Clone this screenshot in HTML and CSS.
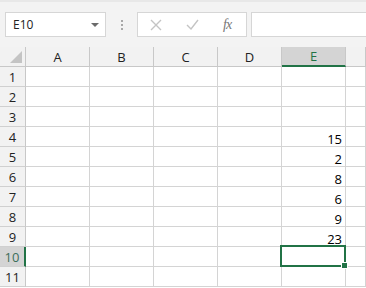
FILE: index.html
```html
<!DOCTYPE html>
<html lang="en">
<head>
  <meta charset="UTF-8" />
  <title>Sheet</title>
  <link rel="stylesheet" href="styles.css">
</head>
<body>
  <!-- Formula bar -->
  <div class="toolbar">
    <div class="namebox">
      <span>E10</span>
      <svg class="caret" width="8" height="4" viewBox="0 0 8 4"><path d="M0 0h8L4 4z" fill="#6b6b6b"/></svg>
    </div>
    <div class="grip"><i></i><i></i><i></i></div>
    <div class="fnbox">
      <svg width="12" height="12" viewBox="0 0 12 12"><path d="M1 1l10 10M11 1L1 11" stroke="#c4c4c4" stroke-width="1.4" fill="none"/></svg>
      <svg width="13" height="11" viewBox="0 0 13 11"><path d="M1 6l4 4 7-9" stroke="#c4c4c4" stroke-width="1.4" fill="none"/></svg>
      <span class="fx">fx</span>
    </div>
    <div class="formula"></div>
  </div>

  <!-- Grid -->
  <div class="sheet" id="sheet"></div>

  <script>
    const cols = ['A', 'B', 'C', 'D', 'E', ''];
    const values = { 4: 15, 5: 2, 6: 8, 7: 6, 8: 9, 9: 23 };
    const sheet = document.getElementById('sheet');

    let html = '<div class="corner"><i></i></div>';
    cols.forEach(c => {
      html += `<div class="colhead${c === 'E' ? ' active' : ''}">${c}</div>`;
    });
    for (let r = 1; r <= 11; r++) {
      html += `<div class="rowhead${r === 10 ? ' active' : ''}">${r}</div>`;
      cols.forEach(c => {
        const v = c === 'E' && values[r] !== undefined ? values[r] : '';
        html += `<div class="cell">${v}</div>`;
      });
    }
    html += '<div class="selection"><i></i></div>';
    sheet.innerHTML = html;
  </script>
</body>
</html>
```

FILE: styles.css
```css
body {
  margin: 0;
  width: 366px;
  height: 288px;
  overflow: hidden;
  background: #ffffff;
  font-family: "Open Sans", "Liberation Sans", sans-serif;
}

.toolbar {
  display: flex;
  align-items: center;
  height: 47px;
  box-sizing: border-box;
  padding-left: 5px;
  background: #f3f3f3;
  border-top: 2px solid #e8e8e8;
}

.namebox {
  display: flex;
  align-items: center;
  justify-content: space-between;
  width: 101px;
  height: 25px;
  box-sizing: border-box;
  padding: 0 6px 0 7px;
  background: #ffffff;
  border: 1px solid #d6d6d6;
  font-size: 12px;
  color: #222;
}

.grip {
  display: flex;
  flex-direction: column;
  gap: 2px;
  width: 31px;
  align-items: center;
}

.grip i {
  width: 2px;
  height: 2px;
  background: #a8a8a8;
}

.fnbox {
  display: flex;
  align-items: center;
  gap: 24px;
  width: 110px;
  height: 25px;
  box-sizing: border-box;
  padding-left: 12px;
  background: #ffffff;
  border: 1px solid #d6d6d6;
}

.fx {
  font-family: "Liberation Serif", serif;
  font-style: italic;
  font-size: 14px;
  color: #777;
  letter-spacing: -1px;
}

.formula {
  flex: 1;
  height: 25px;
  margin-left: 4px;
  box-sizing: border-box;
  background: #ffffff;
  border: 1px solid #d6d6d6;
  border-right: none;
}

.sheet {
  position: relative;
  display: grid;
  grid-template-columns: 26px repeat(5, 64px) 1fr;
  grid-auto-rows: 20px;
}

.corner,
.colhead,
.rowhead {
  background: #f2f2f2;
  box-sizing: border-box;
  border-right: 1px solid #c8c8c8;
  border-bottom: 1px solid #c8c8c8;
  font-size: 13px;
  color: #222;
  display: flex;
  align-items: center;
  justify-content: center;
}

.corner {
  position: relative;
}

.corner i {
  position: absolute;
  right: 3px;
  bottom: 3px;
  border-left: 12px solid transparent;
  border-bottom: 12px solid #c4c4c4;
}

.colhead.active {
  background: #d4d4d4;
  color: #217346;
  border-bottom: 2px solid #217346;
}

.rowhead {
  background: #f2f2f2;
  border-bottom-color: #d0d0d0;
}

.rowhead.active {
  background: #d4d4d4;
  color: #3d6e5a;
  border-right: 2px solid #217346;
}

.cell {
  box-sizing: border-box;
  border-right: 1px solid #d4d4d4;
  border-bottom: 1px solid #d4d4d4;
  font-family: "Open Sans", "Liberation Sans", sans-serif;
  font-size: 13px;
  color: #000;
  text-align: right;
  padding: 3px 3px 0 0;
  line-height: 18px;
}

.selection {
  position: absolute;
  left: 280px;
  top: 198px;
  width: 66px;
  height: 22px;
  box-sizing: border-box;
  border: 2px solid #217346;
}

.selection i {
  position: absolute;
  right: -4px;
  bottom: -4px;
  width: 5px;
  height: 5px;
  background: #217346;
  border: 1px solid #ffffff;
}
```
